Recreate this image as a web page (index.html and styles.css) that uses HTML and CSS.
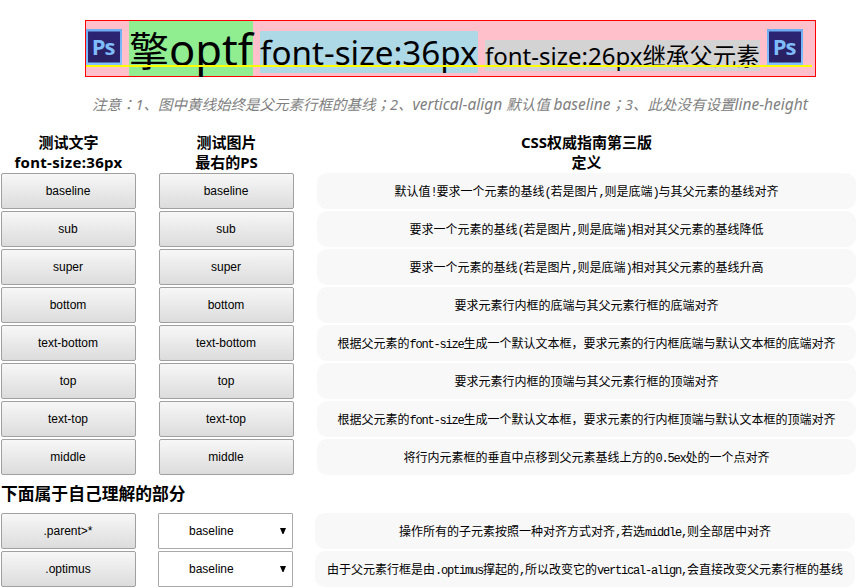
FILE: index.html
```html
<!DOCTYPE html>
<html lang="zh-CN">
<head>
<meta charset="utf-8">
<title>vertical-align</title>
<link rel="stylesheet" href="styles.css">
</head>
<body>
<svg class="defs" aria-hidden="true">
  <defs>
    <linearGradient id="edge" x1="0" y1="0" x2="0" y2="1"><stop offset="0" stop-color="#6eaef0"/><stop offset="1" stop-color="#84c2ff"/></linearGradient>
    <radialGradient id="face" cx=".5" cy=".9" r=".9"><stop offset="0" stop-color="#29205f"/><stop offset="1" stop-color="#2b2474"/></radialGradient>
  </defs>
</svg>
<div class="parent">
  <div class="ps"><svg viewBox="0 0 36 36"><rect width="36" height="36" fill="url(#edge)"/><rect x="2" y="2.5" width="32" height="31" fill="url(#face)"/></svg><span>Ps</span></div>
  <div class="run optimus"><span><i>擎</i>optf</span></div>
  <div class="run text"><span>font-size:36px</span></div>
  <div class="run inherit"><span>font-size:26px<i>继承父元素</i></span></div>
  <div class="ps"><svg viewBox="0 0 36 36"><rect width="36" height="36" fill="url(#edge)"/><rect x="2" y="2.5" width="32" height="31" fill="url(#face)"/></svg><span>Ps</span></div>
  <div class="baseline"></div>
</div>
<p class="note"><span>注意<u lang="zh-TW">：</u>1、图中黄线始终是父元素行框的基线<u lang="zh-TW">；</u>2、</span><span class="latin">vertical-align </span><span>默认值 </span><span class="latin">baseline</span><span><u lang="zh-TW">；</u>3、此处没有设置</span><span class="latin">line-height</span></p>
<div class="grid head">
  <div>测试文字<br><span class="fs">font-size:36px</span></div>
  <div>测试图片<br>最右的PS</div>
  <div>CSS权威指南第三版<br>定义</div>
</div>
<div class="grid">
  <button>baseline</button><button>baseline</button><div class="def">默认值<b>!</b>要求一个元素的基线<b>(</b>若是图片<b>,</b>则是底端<b>)</b>与其父元素的基线对齐</div>
  <button>sub</button><button>sub</button><div class="def">要求一个元素的基线<b>(</b>若是图片<b>,</b>则是底端<b>)</b>相对其父元素的基线降低</div>
  <button>super</button><button>super</button><div class="def">要求一个元素的基线<b>(</b>若是图片<b>,</b>则是底端<b>)</b>相对其父元素的基线升高</div>
  <button>bottom</button><button>bottom</button><div class="def">要求元素行内框的底端与其父元素行框的底端对齐</div>
  <button>text-bottom</button><button>text-bottom</button><div class="def">根据父元素的<b>font-size</b>生成一个默认文本框<u lang="zh-CN">，</u>要求元素的行内框底端与默认文本框的底端对齐</div>
  <button>top</button><button>top</button><div class="def">要求元素行内框的顶端与其父元素行框的顶端对齐</div>
  <button>text-top</button><button>text-top</button><div class="def">根据父元素的<b>font-size</b>生成一个默认文本框<u lang="zh-CN">，</u>要求元素的行内框顶端与默认文本框的顶端对齐</div>
  <button>middle</button><button>middle</button><div class="def">将行内元素框的垂直中点移到父元素基线上方的<b>0.5ex</b>处的一个点对齐</div>
</div>
<h3>下面属于自己理解的部分</h3>
<div class="grid own">
  <button>.parent&gt;*</button><div class="select"><span>baseline</span><svg viewBox="0 0 6 6"><path d="M0 0H6L3.5 6H2.5Z"/></svg></div><div class="def">操作所有的子元素按照一种对齐方式对齐<b>,</b>若选<b>middle,</b>则全部居中对齐</div>
  <button>.optimus</button><div class="select"><span>baseline</span><svg viewBox="0 0 6 6"><path d="M0 0H6L3.5 6H2.5Z"/></svg></div><div class="def">由于父元素行框是由<b>.optimus</b>撑起的<b>,</b>所以改变它的<b>vertical-align,</b>会直接改变父元素行框的基线</div>
</div>
</body>
</html>
```
FILE: styles.css
```css
* { box-sizing: border-box; }
body {
  margin: 0;
  padding-top: 20px;
  width: 856px;
  height: 587px;
  overflow: hidden;
  background: #fff;
  color: #000;
  font-family: "Noto Sans", "Noto Sans CJK SC", sans-serif;
}
.defs { position: absolute; width: 0; height: 0; }
u { text-decoration: none; }
.parent {
  position: relative;
  display: flex;
  align-items: flex-start;
  width: 731px;
  height: 57px;
  margin-left: 85px;
  border: 1px solid #f00;
  background: #ffc0cb;
  white-space: nowrap;
}
.ps { position: relative; width: 36px; height: 36px; margin-top: 8px; flex: none; }
.ps svg { display: block; width: 36px; height: 36px; }
.ps span {
  position: absolute;
  left: 0;
  top: 0;
  width: 34px;
  text-align: center;
  color: #7fbcfa;
  font: bold 22px/35px "Open Sans", sans-serif;
  letter-spacing: -1px;
}
.run { flex: none; display: flex; align-items: flex-start; }
.optimus { width: 124px; height: 55px; margin-left: 7px; background: #90ee90; font-size: 43.5px; line-height: 57px; }
.optimus i { font-size: 40px; }
.text { width: 218px; height: 42px; margin: 10px 0 0 7px; background: #add8e6; font-size: 33.2px; line-height: 43px; }
.inherit { width: 275px; height: 31px; margin: 19px 7px 0; background: #d3d3d3; font-size: 24px; line-height: 31px; }
.run i { font-style: normal; }
.inherit i { font-size: 23.5px; }
.baseline { position: absolute; left: 0; top: 44px; width: 726px; height: 2px; background: #ff0; }
.note {
  display: flex;
  align-items: baseline;
  margin: 16px 0 0 92px;
  height: 22px;
  font-size: 14.5px;
  line-height: 22px;
  font-style: italic;
  color: #808080;
  white-space: pre;
}
.note u { font-family: "Noto Sans CJK TC", sans-serif; line-height: 1; }
.latin { font-size: 15.5px; }
.grid {
  display: grid;
  grid-template-columns: 135px 135px 539px;
  grid-auto-rows: 36px;
  column-gap: 23px;
  row-gap: 2px;
  margin-left: 1px;
}
.head {
  grid-auto-rows: 40px;
  margin: 17px 0 1px 1px;
  font-size: 15px;
  font-weight: bold;
  line-height: 20px;
  text-align: center;
}
.fs { letter-spacing: 0.3px; }
button {
  margin: 0;
  padding: 0 1px 0 0;
  border: 1px solid #a0a0a0;
  border-radius: 2px;
  background: linear-gradient(#f7f7f7, #dcdcdc);
  color: #000;
  font: 12px/34px "Liberation Sans", sans-serif;
}
.def {
  border-radius: 10px;
  background: #f8f8f8;
  font: 12px/36px "Noto Sans CJK SC", sans-serif;
  text-align: center;
  white-space: nowrap;
}
.def b { font: 12px/1 "Liberation Mono", monospace; letter-spacing: -1.2px; }
h3 { margin: 7px 0 8px 1px; font-size: 16.8px; line-height: 23px; }
.own { grid-template-columns: 135px 135px 540px; column-gap: 22px; }
.select {
  display: flex;
  align-items: center;
  border: 1px solid #a9a9a9;
  border-radius: 1px;
  font: 12px/34px "Liberation Sans", sans-serif;
  padding: 0 6px 0 30px;
  justify-content: space-between;
}
.select svg { width: 6px; height: 6px; }
```
